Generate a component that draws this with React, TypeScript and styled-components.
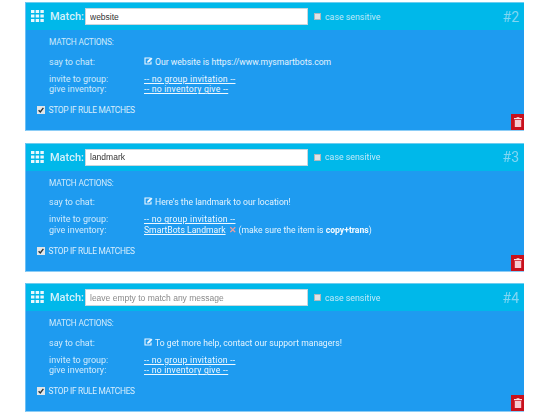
import React from "react";
import styled, { createGlobalStyle } from "styled-components";

const Global = createGlobalStyle`
  html, body { margin: 0; padding: 0; background: #fff; overflow: hidden; }
  body { font-family: "Roboto", "Open Sans", sans-serif; }
`;
const Page = styled.div`
  width: 550px; height: 415px; box-sizing: border-box;
  padding: 2px 25px 0 25px; display: flex; flex-direction: column; gap: 11.5px;
  overflow: hidden; filter: blur(0.35px);
`;
const Card = styled.section`
  width: 499px; height: 129px; box-sizing: border-box; background: #1e9bf0;
  border-left: 1px solid #6cc0f5; border-bottom: 1px solid #8ccdf6; position: relative; flex: none;
  color: #dff1fd; display: flex; flex-direction: column;
`;
const Header = styled.header`
  height: 28px; box-sizing: border-box; background: #00b8ea; display: flex; align-items: center; flex: none;
  padding-left: 5px; border-top: 1px solid #6ccdf0;
`;
const Grip = styled.svg`
  width: 13px; height: 13px; flex: none; margin-right: 6px;
`;
const MatchLabel = styled.span`
  font-size: 11px; font-weight: 500; color: #d4f1fb; width: 35px; flex: none;
`;
const TextInput = styled.input`
  width: 223px; height: 17px; box-sizing: border-box; padding: 0 4px; border: 1px solid #c9d6dc; flex: none;
  font: 8.5px "Liberation Sans", sans-serif; color: #333; background: #fff; outline: 0;
  &::placeholder { color: #8a8a8a; opacity: 1; }
`;
const CaseBox = styled.span`
  width: 7px; height: 7px; box-sizing: border-box; margin-left: 6px; background: #dfe3e5; border: 1px solid #aeb9bf; flex: none;
`;
const CaseLabel = styled.span`
  font-size: 8.8px; margin-left: 4px; color: #bfe9f8;
`;
const RuleNo = styled.span`
  margin-left: auto; margin-right: 5px; font-size: 14px; color: #7fd6f3;
`;
const Body = styled.div`
  padding: 7px 0 0 23px; font-size: 9px; line-height: 10px;
  display: flex; flex-direction: column;
`;
const Title = styled.div`
  font-size: 8.4px; letter-spacing: -0.2px; height: 10px; color: #cde9fb; margin-bottom: 9.5px;
`;
const ActionRow = styled.div<{ $mb?: number }>`
  display: grid; grid-template-columns: 95px 1fr; height: 10.5px;
  align-items: center; margin-bottom: ${p => p.$mb ?? 0}px; color: #cfeafc;
`;
const Value = styled.span`
  display: flex; align-items: center; gap: 2px; color: #e4f4fe; white-space: nowrap; font-size: 8.65px;
`;
const Linked = styled.span<{ $wide?: boolean }>`
  color: #eef8ff; text-decoration: underline; text-underline-offset: 1px;
  letter-spacing: ${p => (p.$wide ? "0.25px" : "0")};
`;
const Strong = styled.b`
  font-weight: 700; color: #f4fbff;
`;
const Remove = styled.span`
  color: #e8a0a0; font-weight: 700; margin: 0 0 0 1px;
`;
const Stop = styled.div<{ $top: number }>`
  display: flex; align-items: center; margin: ${p => p.$top}px 0 0 -12px; font-size: 8.4px; letter-spacing: -0.3px; color: #d6edfc;
`;
const StopBox = styled.svg`
  width: 8px; height: 8px; margin-right: 3.5px; flex: none;
`;
const Trash = styled.button`
  position: absolute; right: 0; bottom: 0; width: 13px; height: 16px; padding: 0; border: 0;
  background: #c8101c; display: flex; align-items: center; justify-content: center;
`;
const Edit = styled.svg`
  width: 9px; height: 8px; flex: none; margin-top: -2px;
`;

const GripIcon = () => (
  <Grip viewBox="0 0 13 13">
    {[0, 4.5, 9].map(y => [0, 4.7, 9.4].map(x => (
      <rect key={`${x}-${y}`} x={x} y={y} width="3.4" height="3" fill="#e8f8fd" />
    )))}
  </Grip>
);
const EditIcon = () => (
  <Edit viewBox="0 0 9 8">
    <path d="M6.5 1H1v6h6V4.5" fill="none" stroke="#eef8ff" strokeWidth="1.1" />
    <path d="M3 5.6 3.4 4 7 .4 8.5 1.8 4.8 5.4Z" fill="#eef8ff" />
  </Edit>
);
const Check = () => (
  <StopBox viewBox="0 0 8 8">
    <rect width="8" height="8" fill="#dfe5e8" />
    <path d="M1.6 4.2 3.3 6 6.4 1.8" fill="none" stroke="#2b3338" strokeWidth="1.4" />
  </StopBox>
);
const TrashIcon = () => (
  <svg width="8" height="10" viewBox="0 0 8 10">
    <path d="M2.6 1V.2h2.8V1H8v1.2H0V1Z" fill="#fbdde1" />
    <path d="M.8 3h6.4v7H.8Z" fill="#f8c9cf" />
  </svg>
);

type Rule = { n: number; value?: string; say: string; inv?: boolean; gap: number };
const rules: Rule[] = [
  { n: 2, value: "website", say: "Our website is https://www.mysmartbots.com", gap: 10 },
  { n: 3, value: "landmark", say: "Here's the landmark to our location!", inv: true, gap: 11 },
  { n: 4, say: "To get more help, contact our support managers!", gap: 10 },
];

export default function App() {
  return (
    <Page>
      <Global />
      {rules.map(r => (
        <Card key={r.n}>
          <Header>
            <GripIcon />
            <MatchLabel>Match:</MatchLabel>
            <TextInput readOnly value={r.value ?? ""} placeholder="leave empty to match any message" />
            <CaseBox />
            <CaseLabel>case sensitive</CaseLabel>
            <RuleNo>#{r.n}</RuleNo>
          </Header>
          <Body>
            <Title>MATCH ACTIONS:</Title>
            <ActionRow $mb={6.5}>
              <span>say to chat:</span>
              <Value><EditIcon />{r.say}</Value>
            </ActionRow>
            <ActionRow>
              <span>invite to group:</span>
              <Value><Linked $wide>-- no group invitation --</Linked></Value>
            </ActionRow>
            <ActionRow>
              <span>give inventory:</span>
              {r.inv ? (
                <Value>
                  <Linked>SmartBots Landmark</Linked>
                  <Remove>✕</Remove>
                  <span>(make sure the item is <Strong>copy+trans</Strong>)</span>
                </Value>
              ) : (
                <Value><Linked $wide>-- no inventory give --</Linked></Value>
              )}
            </ActionRow>
            <Stop $top={r.gap}><Check />STOP IF RULE MATCHES</Stop>
          </Body>
          <Trash aria-label="delete"><TrashIcon /></Trash>
        </Card>
      ))}
    </Page>
  );
}
